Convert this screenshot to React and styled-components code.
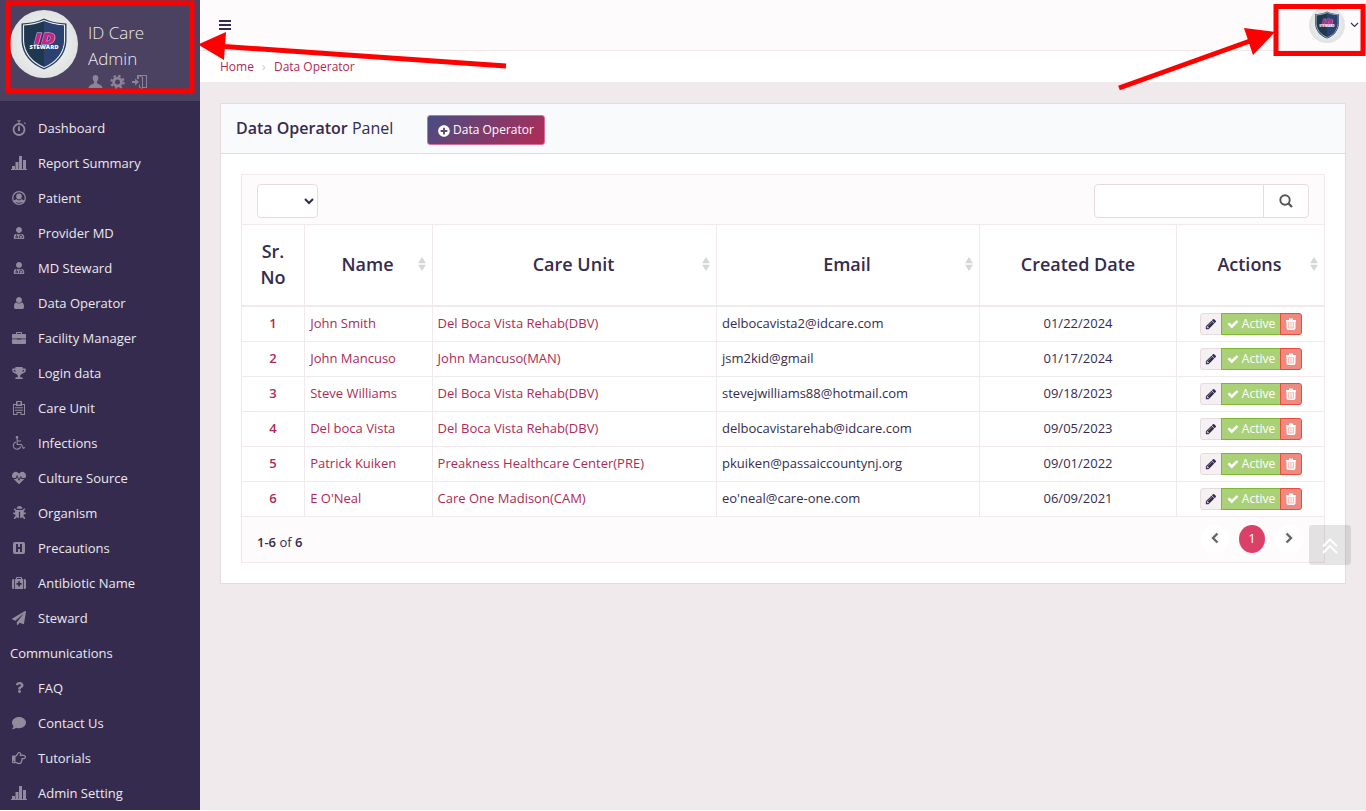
import React from "react";
import styled, { createGlobalStyle, css } from "styled-components";
import {
  FaUserMd, FaTrophy, FaHeartbeat, FaBug, FaPaperPlane,
  FaQuestion, FaComment, FaRegHandPointRight, FaPlusCircle,
} from "react-icons/fa";

const Global = createGlobalStyle`
  * { box-sizing: border-box; }
  body {
    margin: 0;
    background: #f1eaec;
    color: #352b4e;
    font: 13px/20px "Open Sans", "Noto Sans", sans-serif;
    overflow: hidden;
  }
`;

const Page = styled.div`
  display: flex;
  width: 1366px;
  height: 811px;
  position: relative;
  overflow: hidden;
  border-bottom: 1px solid #fff;
`;

/* ---------- sidebar ---------- */
const Sidebar = styled.aside`
  width: 200px;
  flex: none;
  background: #352b4e;
  overflow: hidden;
`;

const UserBlock = styled.div`
  height: 101px;
  display: flex;
  padding: 10px 0 0 10px;
  gap: 10px;
  background: #4b4160;
`;

const Avatar = styled.span`
  width: ${(p) => p.$size}px;
  height: ${(p) => p.$size}px;
  flex: none;
  border-radius: 50%;
  background: radial-gradient(circle, #eef1ef 30%, #dcdfdf 80%);
  display: block;
  overflow: hidden;
  svg { display: block; width: 100%; height: 100%; }
`;

const UserInfo = styled.div`
  color: #eceaef;
  font-size: 17px;
  font-weight: 300;
  line-height: 26px;
  padding-top: 10px;
`;

const UserLinks = styled.div`
  display: flex;
  gap: 7px;
  margin-top: 2px;
  svg { display: block; width: 15px; height: 16px; fill: #8b8498; }
`;

const Nav = styled.nav`
  padding-top: 10px;
`;

const NavItem = styled.a`
  display: flex;
  flex-wrap: wrap;
  height: ${(p) => (p.$tall ? 70 : 35)}px;
  line-height: 35px;
  padding-left: 10px;
  color: #eae8ee;
`;

const NavIcon = styled.span`
  width: 18px;
  height: 35px;
  margin-right: 10px;
  padding-bottom: 2px;
  display: flex;
  align-items: center;
  justify-content: center;
  color: #928b9d;
  svg { display: block; width: ${(p) => p.$w}px; height: ${(p) => p.$h || p.$w}px; fill: currentColor; }
`;

const NavRest = styled.span`
  width: 100%;
`;

/* ---------- header ---------- */
const Main = styled.main`
  flex: 1;
  min-width: 0;
`;

const TopBar = styled.header`
  height: 51px;
  padding: 0 7px 0 19px;
  display: flex;
  justify-content: space-between;
  background: #fdfbfc;
  border-bottom: 1px solid #f1eaec;
`;

const Burger = styled.div`
  width: 12px;
  margin-top: 20px;
  display: flex;
  flex-direction: column;
  gap: 2px;
  i { height: 2px; background: #352b4e; }
`;

const Account = styled.div`
  display: flex;
  gap: 5px;
  padding-top: 7px;
  & > svg { margin-top: 15px; }
`;

const Crumbs = styled.div`
  height: 31px;
  background: #fff;
  padding: 6px 20px;
  font-size: 12px;
  color: #ae2a56;
  display: flex;
`;

const CrumbSep = styled.span`
  width: 20px;
  text-align: center;
  color: #d0c8cc;
`;

/* ---------- panel ---------- */
const Panel = styled.section`
  margin: 21px 20px 0;
  border: 1px solid #e8dbdf;
  background: #fff;
  height: 481px;
`;

const PanelHead = styled.div`
  height: 50px;
  background: #f9fafc;
  border-bottom: 1px solid #e8dbdf;
  display: flex;
  padding-left: 15px;
`;

const Title = styled.h2`
  margin: 0;
  width: 191px;
  font-size: 16px;
  font-weight: 400;
  line-height: 48px;
  b { font-weight: 600; }
`;

const AddButton = styled.button`
  margin: 11px 0 0;
  padding: 0;
  width: 118px;
  height: 30px;
  border: 1px solid #da6b91;
  border-radius: 3px;
  background: linear-gradient(135deg, #454e84, #b52a56) border-box;
  color: #fff;
  font: 12px/18px "Open Sans", "Noto Sans", sans-serif;
  display: flex;
  align-items: center;
  justify-content: center;
  gap: 3px;
  svg { width: 12px; height: 12px; position: relative; top: 1px; }
`;

const Grid = styled.div`
  margin: 20px 20px 0;
  border: 1px solid #f1eaec;
  height: 389px;
`;

const Toolbar = styled.div`
  height: 49px;
  background: #fdfbfc;
  display: flex;
  justify-content: space-between;
  padding: 9px 15px 0;
`;

const Field = styled.div`
  width: ${(p) => p.$w}px;
  height: 34px;
  border: 1px solid #e8dbdf;
  border-radius: 4px;
  background: #fff;
  display: flex;
  justify-content: flex-end;
  align-items: center;
`;

const SearchButton = styled.span`
  width: 45px;
  height: 32px;
  border-left: 1px solid #e8dbdf;
  display: flex;
  align-items: center;
  justify-content: center;
`;

const Table = styled.table`
  width: 100%;
  table-layout: fixed;
  border-collapse: separate;
  border-spacing: 0;
`;

const cell = css`
  border: 0 solid #f1eaec;
  border-right-width: 1px;
  &:last-child { border-right-width: 0; }
`;

const Th = styled.th`
  ${cell}
  border-top-width: 1px;
  border-bottom-width: 2px;
  height: 83px;
  padding: 0 0 2px;
  font-size: 18px;
  line-height: 26px;
  font-weight: 600;
`;

const HeadCell = styled.div`
  display: grid;
  grid-template-columns: 1fr auto 1fr;
  align-items: center;
  padding: ${(p) => (p.$sortable ? "0 6px 0 4px" : "0")};
  & > svg { justify-self: end; }
  & > span { grid-column: 2; }
`;

const Td = styled.td`
  ${cell}
  border-bottom-width: 1px;
  height: 35px;
  padding: 0 5px 2px ${(p) => p.$pad || 5}px;
  text-align: ${(p) => (p.$center ? "center" : "left")};
  color: ${(p) => (p.$accent ? "#ae2a56" : "inherit")};
  font-weight: ${(p) => (p.$bold ? 600 : 400)};
`;

const Actions = styled.div`
  display: flex;
  justify-content: center;
  height: 22px;
  position: relative;
  top: 1px;
`;

const tones = {
  edit: ["#f5f0f2", "#e8dbdf", "#352b4e"],
  active: ["#aad178", "#7db831", "#fff"],
  remove: ["#ef8a80", "#e74c3c", "#fff"],
};

const ActionButton = styled.span`
  width: ${(p) => p.$w}px;
  height: 22px;
  margin-right: -1px;
  border: 1px solid ${(p) => tones[p.$tone][1]};
  background: ${(p) => tones[p.$tone][0]};
  color: ${(p) => tones[p.$tone][2]};
  border-radius: ${(p) => p.$radius || "0"};
  font-size: 12px;
  line-height: 18px;
  display: flex;
  align-items: center;
  justify-content: center;
  gap: 3px;
  svg { display: block; width: 12px; height: 12px; fill: currentColor; }
`;

const Footer = styled.div`
  height: 45px;
  background: #fdfbfc;
  display: flex;
  justify-content: space-between;
  padding: 8px 21px 0 15px;
`;

const Range = styled.div`
  padding-top: 7px;
  b { font-weight: 600; }
`;

const Pager = styled.div`
  display: flex;
  gap: 10px;
`;

const PageDot = styled.span`
  width: ${(p) => (p.$on ? 26 : 28)}px;
  height: 28px;
  padding-bottom: 2px;
  border-radius: 50%;
  background: ${(p) => (p.$on ? "#db4069" : "#fff")};
  color: #fff;
  display: flex;
  align-items: center;
  justify-content: center;
`;

const ToTop = styled.div`
  position: absolute;
  left: 1309px;
  top: 525px;
  width: 42px;
  height: 40px;
  padding-top: 2px;
  border-radius: 3px;
  background: rgba(0, 0, 0, 0.1);
  display: flex;
  align-items: center;
  justify-content: center;
`;

const Overlay = styled.svg`
  position: absolute;
  left: 0;
  top: 0;
`;

/* ---------- drawings ---------- */
const Glyph = ({ d }) => <svg viewBox="0 0 1792 1792"><path d={d} /></svg>;

const PATHS = {
  user: "M1536 1399q0 109-62.5 187t-150.5 78h-854q-88 0-150.5-78t-62.5-187q0-85 8.5-160.5t31.5-152 58.5-131 94-89 134.5-34.5q131 128 313 128t313-128q76 0 134.5 34.5t94 89 58.5 131 31.5 152 8.5 160.5zm-256-887q0 159-112.5 271.5t-271.5 112.5-271.5-112.5-112.5-271.5 112.5-271.5 271.5-112.5 271.5 112.5 112.5 271.5z",
  check: "M1671 566q0 40-28 68l-724 724-136 136q-28 28-68 28t-68-28l-136-136-362-362q-28-28-28-68t28-68l136-136q28-28 68-28t68 28l294 295 656-657q28-28 68-28t68 28l136 136q28 28 28 68z",
  pencil: "M491 1536l91-91-235-235-91 91v107h128v128h107zm523-928q0-22-22-22-10 0-17 7l-542 542q-7 7-7 17 0 22 22 22 10 0 17-7l542-542q7-7 7-17zm-54-192l416 416-832 832h-416v-416zm683 96q0 53-37 90l-166 166-416-416 166-165q36-38 90-38 53 0 91 38l235 234q37 39 37 91z",
};

const Trash = () => (
  <svg viewBox="0 0 12 12">
    <path d="M2.200 3.500h7.600V10q0 1.300-1.300 1.300h-5Q2.200 11.300 2.200 10z" fill="#fff" fillOpacity=".45" stroke="#fff" strokeWidth="1.400" />
    <path d="M1 2h10v1.700H1zM4 .4h4v2H4zM4.400 5h.7v4.600h-.7zM5.700 5h.7v4.600h-.7zM7 5h.7v4.600H7z" />
  </svg>
);
const Stopwatch = () => (
  <svg viewBox="0 0 14 16">
    <circle cx="7" cy="9.500" r="5.500" fill="none" stroke="currentColor" strokeWidth="1.800" />
    <path d="M5.500 0.300h3v1.200h-1v2h-1v-2h-1zM6.300 6h1.400l.4 4.200a1.100 1.100 0 0 1-2.200 0zM11.800 3l1.300 1.300.8-.9-1.300-1.200z" />
  </svg>
);
const Chart = () => (
  <svg viewBox="0 0 16 14"><path d="M0 13h16v1H0zM1 10h3v3H1zM4.500 6h3v7h-3zM8 0h3v13H8zM12 4h3v9h-3z" /></svg>
);
const Patient = () => (
  <svg viewBox="0 0 14 14">
    <circle cx="7" cy="7" r="6.300" fill="none" stroke="currentColor" strokeWidth="1.300" />
    <circle cx="7" cy="5.400" r="2.800" />
    <path d="M1.200 9.500c1.300-.2 2.500-.6 3.200-1.400C5.200 9 6 9.400 7 9.400s1.800-.4 2.600-1.300c.7.8 1.900 1.200 3.200 1.400l-1.300 1.900C10.300 11 9 11.800 7 11.800s-3.300-.8-4.500-.4z" />
  </svg>
);
const Briefcase = () => (
  <svg viewBox="0 0 14 12">
    <path fillRule="evenodd" d="M4 2V.8Q4 0 4.800 0h4.400q.8 0 .8.800V2h3q1 0 1 1v3.500H8.500V6h-3v.5H0V3q0-1 1-1zm1 0h4V1H5zM0 7.300h5.500V8h3v-.7H14V11q0 1-1 1H1q-1 0-1-1zM6.200 6.600h1.600v.8H6.200z" />
  </svg>
);
const Building = () => (
  <svg viewBox="0 0 12 14" fillRule="evenodd">
    <path d="M0 3h3V1q0-1 1-1h4q1 0 1 1v2h3v11H7.500v-2h-3v2H0zm1 1v9h2.500v-2h5v2H11V4H9v1H3V4zm3.500-3v2.500h3V1zM2 6.300h8v1H2zM2 8.700h8v1H2z" />
  </svg>
);
const Wheelchair = () => (
  <svg viewBox="0 0 14 14">
    <circle cx="5" cy="1.400" r="1.300" />
    <path d="M5.200 2.500v6h4.300l1.700 3.700 1.800-.8M5.200 5h3.800M4 6A3.700 3.700 0 1 0 8.600 10.500" fill="none" stroke="currentColor" strokeWidth="1.100" />
  </svg>
);
const HSquare = () => (
  <svg viewBox="0 0 12 12"><path fillRule="evenodd" d="M2 0h8q2 0 2 2v8q0 2-2 2H2q-2 0-2-2V2Q0 0 2 0zm1 2v8h2V7h2v3h2V2H7v3H5V2z" /></svg>
);
const Medkit = () => (
  <svg viewBox="0 0 14 12">
    <path fillRule="evenodd" d="M4 2V.8Q4 0 4.800 0h4.400q.8 0 .8.800V2h1v10H3V2zm1 0h4V1H5zm1.200 2.300V6H4.500v1.700h1.700v1.700h1.700V7.700h1.700V6H7.900V4.300zM2.200 2v10H1.500Q0 12 0 10.500v-7Q0 2 1.500 2zM11.800 2h.7Q14 2 14 3.500v7q0 1.500-1.500 1.500h-.7z" />
  </svg>
);

const Shield = () => (
  <svg viewBox="0 0 68 68">
    <path d="M34 8.500C27 12 19 13 11.500 13.500V31C12 44 21 54.500 34 59.500 47 54.500 56 44 56.500 31V13.500C49 13 41 12 34 8.500z" fill="#253e63" />
    <path d="M34 10.500C27 13.700 20 14.500 13.500 15V31C14 43 22 52.500 34 57.500 46 52.500 54 43 54.500 31V15C48 14.500 41 13.700 34 10.500z" fill="#203750" stroke="#e6ecef" strokeWidth="1.200" />
    <path d="M34 11.300C41 14.400 47.500 15.200 53.800 15.700V31C53.300 42.500 45.700 51.700 34 56.700z" fill="#2b4270" />
    <text x="34.500" y="33.700" textAnchor="middle" textLength="21" lengthAdjust="spacingAndGlyphs" fontFamily="Open Sans, sans-serif" fontWeight="800" fontStyle="italic" fontSize="16" fill="#c4228c" stroke="#efb4da" strokeWidth=".9" paintOrder="stroke">ID</text>
    <text x="34" y="38.500" textAnchor="middle" textLength="29" lengthAdjust="spacingAndGlyphs" fontFamily="Open Sans, sans-serif" fontWeight="800" fontSize="5.800" fill="#fff">STEWARD</text>
  </svg>
);

const Sort = () => (
  <svg width="8" height="14" viewBox="0 0 8 14" fill="#d6d6d6"><path d="M4 0l4 6.200H0zM4 14l4-6.200H0z" /></svg>
);

const NAV = [
  ["Dashboard", <Stopwatch />, 14, 16],
  ["Report Summary", <Chart />, 16, 14],
  ["Patient", <Patient />, 14],
  ["Provider MD", <FaUserMd />, 12],
  ["MD Steward", <FaUserMd />, 12],
  ["Data Operator", <Glyph d={PATHS.user} />, 14],
  ["Facility Manager", <Briefcase />, 14, 12],
  ["Login data", <FaTrophy />, 14, 12],
  ["Care Unit", <Building />, 12, 14],
  ["Infections", <Wheelchair />, 14],
  ["Culture Source", <FaHeartbeat />, 14],
  ["Organism", <FaBug />, 13],
  ["Precautions", <HSquare />, 12],
  ["Antibiotic Name", <Medkit />, 14, 12],
  ["Steward", <FaPaperPlane />, 14, 14, "Communications"],
  ["FAQ", <FaQuestion />, 11],
  ["Contact Us", <FaComment />, 14],
  ["Tutorials", <FaRegHandPointRight />, 14],
  ["Admin Setting", <Chart />, 16, 14],
];

const COLUMNS = [
  ["Sr. No", 63], ["Name", 128, true], ["Care Unit", 284, true],
  ["Email", 263, true], ["Created Date", 197], ["Actions", 147, true],
];

const ROWS = [
  ["John Smith", "Del Boca Vista Rehab(DBV)", "delbocavista2@idcare.com", "01/22/2024"],
  ["John Mancuso", "John Mancuso(MAN)", "jsm2kid@gmail", "01/17/2024"],
  ["Steve Williams", "Del Boca Vista Rehab(DBV)", "stevejwilliams88@hotmail.com", "09/18/2023"],
  ["Del boca Vista", "Del Boca Vista Rehab(DBV)", "delbocavistarehab@idcare.com", "09/05/2023"],
  ["Patrick Kuiken", "Preakness Healthcare Center(PRE)", "pkuiken@passaiccountynj.org", "09/01/2022"],
  ["E O'Neal", "Care One Madison(CAM)", "eo'neal@care-one.com", "06/09/2021"],
];

export default function App() {
  return (
    <Page>
      <Global />
      <Sidebar>
        <UserBlock>
          <Avatar $size={68}><Shield /></Avatar>
          <UserInfo>
            ID Care<br />Admin
            <UserLinks>
              <svg viewBox="0 0 15 16"><path d="M7.500 1c2 0 3 1.500 2.800 3.500-.2 1.500-.8 2.500-1.300 3v1.800c1 1 5 1.500 5.500 4.700H.500C1 10.800 5 10.300 6 9.300V7.500c-.5-.5-1.100-1.500-1.300-3C4.500 2.500 5.500 1 7.500 1z" /></svg>
              <svg viewBox="0 0 15 16">
                <circle cx="7.500" cy="8" r="3.900" fill="none" stroke="#8b8498" strokeWidth="2.800" />
                <circle cx="7.500" cy="8" r="6.100" fill="none" stroke="#8b8498" strokeWidth="2.200" strokeDasharray="2.400 2.391" />
              </svg>
              <svg viewBox="0 0 15 16"><path d="M0 7h3V4.500L7 8l-4 3.500V9H0zM5 1h10v13h-4v2L7 13.500v-3h1V13l2 1V3.500L7 2v3H5zM11 13h3V2H9l2 1z" /></svg>
            </UserLinks>
          </UserInfo>
        </UserBlock>
        <Nav>
          {NAV.map(([label, icon, w, h, rest]) => (
            <NavItem key={label} $tall={!!rest}>
              <NavIcon $w={w} $h={h}>{icon}</NavIcon>
              <span>{label}</span>
              {rest && <NavRest>{rest}</NavRest>}
            </NavItem>
          ))}
        </Nav>
      </Sidebar>

      <Main>
        <TopBar>
          <Burger><i /><i /><i /></Burger>
          <Account>
            <Avatar $size={36}><Shield /></Avatar>
            <svg width="9" height="6" viewBox="0 0 9 6"><path d="M1 1l3.500 3.500L8 1" fill="none" stroke="#352b4e" strokeWidth="1.100" /></svg>
          </Account>
        </TopBar>
        <Crumbs><span>Home</span><CrumbSep>›</CrumbSep><span>Data Operator</span></Crumbs>

        <Panel>
          <PanelHead>
            <Title><b>Data Operator</b> Panel</Title>
            <AddButton><FaPlusCircle />Data Operator</AddButton>
          </PanelHead>
          <Grid>
            <Toolbar>
              <Field $w={61}>
                <svg width="16" height="8" viewBox="0 0 16 8"><path d="M4 2l4 4 4-4" fill="none" stroke="#352b4e" strokeWidth="2" /></svg>
              </Field>
              <Field $w={215}>
                <SearchButton>
                  <svg width="14" height="14" viewBox="0 0 14 14" fill="none" stroke="#555"><circle cx="6" cy="6" r="4.700" strokeWidth="1.900" /><path d="M9.300 9.300l3.700 3.700" strokeWidth="2.300" /></svg>
                </SearchButton>
              </Field>
            </Toolbar>
            <Table>
              <colgroup>{COLUMNS.map(([n, w]) => <col key={n} width={w} />)}</colgroup>
              <thead>
                <tr>
                  {COLUMNS.map(([name, , sortable]) => (
                    <Th key={name}>
                      <HeadCell $sortable={sortable}>
                        <span>{name === "Sr. No" ? <>Sr.<br />No</> : name}</span>
                        {sortable && <Sort />}
                      </HeadCell>
                    </Th>
                  ))}
                </tr>
              </thead>
              <tbody>
                {ROWS.map(([name, unit, email, date], i) => (
                  <tr key={name}>
                    <Td $center $accent $bold>{i + 1}</Td>
                    <Td $accent $pad={5.2}>{name}</Td>
                    <Td $accent $pad={4.6}>{unit}</Td>
                    <Td>{email}</Td>
                    <Td $center>{date}</Td>
                    <Td $center>
                      <Actions>
                        <ActionButton $tone="edit" $w={22} $radius="3px 0 0 3px"><Glyph d={PATHS.pencil} /></ActionButton>
                        <ActionButton $tone="active" $w={60}><Glyph d={PATHS.check} />Active</ActionButton>
                        <ActionButton $tone="remove" $w={22} $radius="0 3px 3px 0"><Trash /></ActionButton>
                      </Actions>
                    </Td>
                  </tr>
                ))}
              </tbody>
            </Table>
            <Footer>
              <Range><b>1-6</b> of <b>6</b></Range>
              <Pager>
                <PageDot><svg width="8" height="12" viewBox="0 0 8 12"><path d="M6.500 1.500L2 6l4.500 4.500" fill="none" stroke="#666" strokeWidth="2.400" /></svg></PageDot>
                <PageDot $on>1</PageDot>
                <PageDot><svg width="8" height="12" viewBox="0 0 8 12"><path d="M1.500 1.500L6 6l-4.500 4.500" fill="none" stroke="#666" strokeWidth="2.400" /></svg></PageDot>
              </Pager>
            </Footer>
          </Grid>
        </Panel>
      </Main>

      <ToTop>
        <svg width="16" height="16" viewBox="0 0 16 16" fill="none" stroke="#fff" strokeWidth="2"><path d="M1 8.500l7-7 7 7M1 15l7-7 7 7" /></svg>
      </ToTop>

      <Overlay width="1366" height="100" viewBox="0 0 1366 100" fill="none">
        <rect x="8" y="3" width="184" height="88" stroke="#f00" strokeWidth="5" />
        <rect x="1276" y="6.500" width="87" height="47" stroke="#f00" strokeWidth="5" />
        <path d="M506 66L224 46.500M1119 88L1250 41" stroke="#f00" strokeWidth="5" />
        <path d="M198 44.500l28-12.500-2 28zM1275 32l-31-4 9 27z" fill="#f00" />
      </Overlay>
    </Page>
  );
}
